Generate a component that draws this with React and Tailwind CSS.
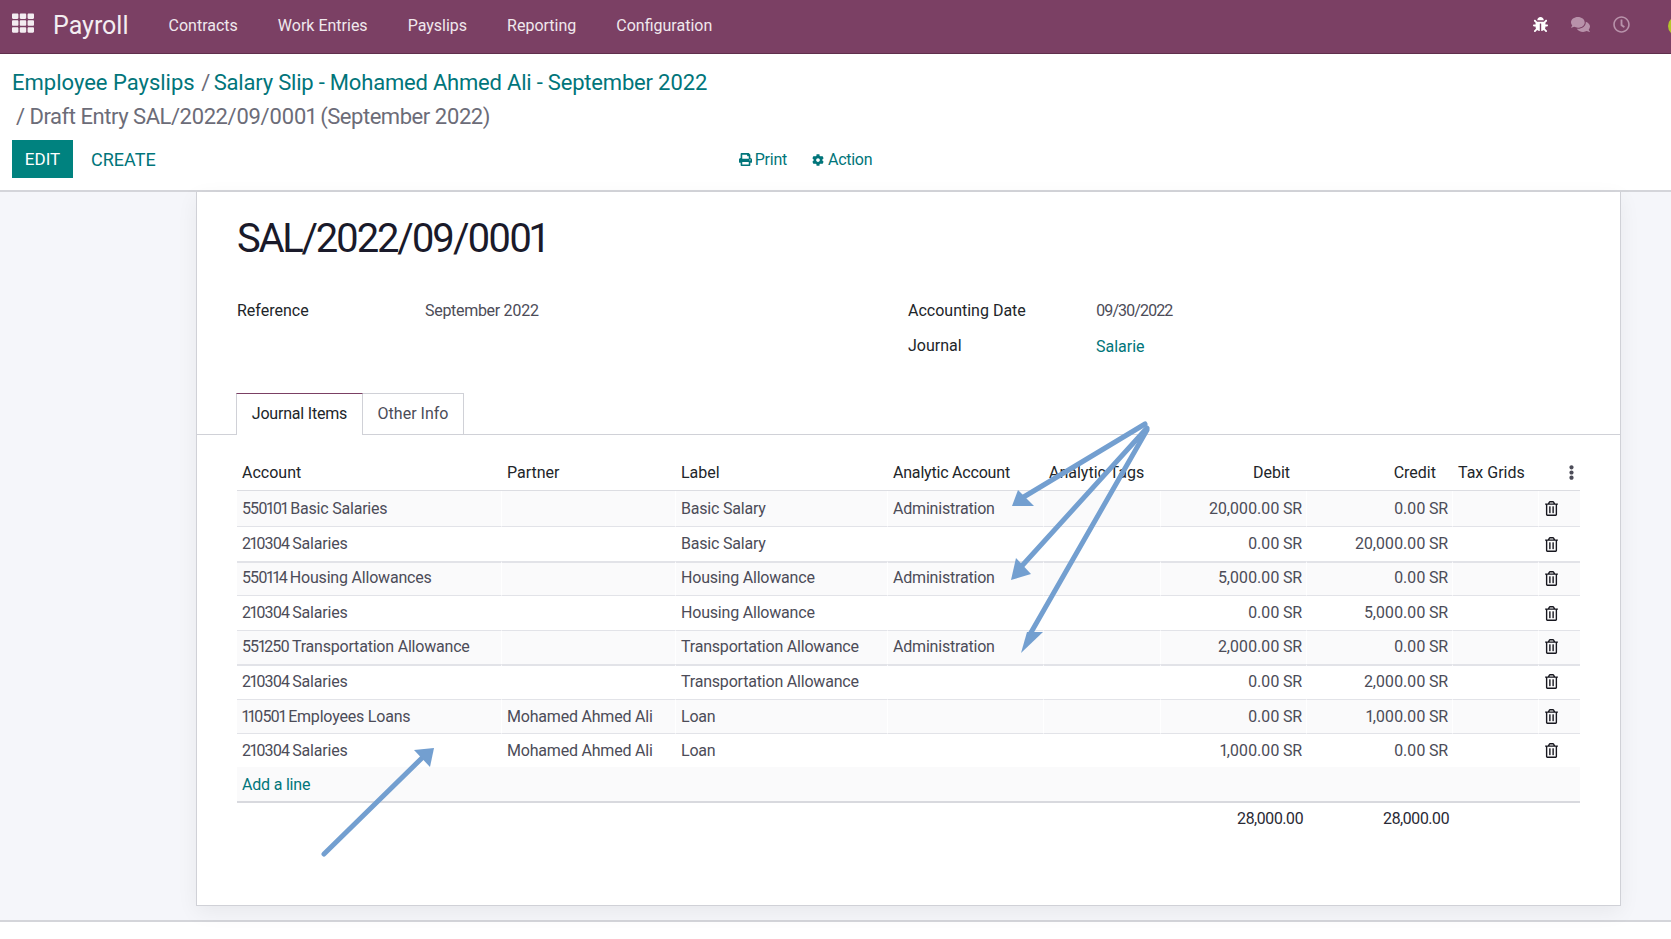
import React from "react";
import { FaTh, FaBug, FaComments, FaRegClock, FaPrint, FaCog, FaEllipsisV, FaRegTrashAlt } from "react-icons/fa";

const rows = [
  { code: "550101", a: "Basic Salaries", p: "", l: "Basic Salary", n: "Administration", d: "20,000.00 SR", c: "0.00 SR", h: "h-[35px]", b: "border-t-0", s: "bg-[#fafafb]", t: "" },
  { code: "210304", a: "Salaries", p: "", l: "Basic Salary", n: "", d: "0.00 SR", c: "20,000.00 SR", h: "h-[35px]", b: "border-t", s: "bg-white", t: "" },
  { code: "550114", a: "Housing Allowances", p: "", l: "Housing Allowance", n: "Administration", d: "5,000.00 SR", c: "0.00 SR", h: "h-[34px]", b: "border-t-2", s: "bg-[#fafafb]", t: "pb-[2px]" },
  { code: "210304", a: "Salaries", p: "", l: "Housing Allowance", n: "", d: "0.00 SR", c: "5,000.00 SR", h: "h-[35px]", b: "border-t", s: "bg-white", t: "" },
  { code: "551250", a: "Transportation Allowance", p: "", l: "Transportation Allowance", n: "Administration", d: "2,000.00 SR", c: "0.00 SR", h: "h-[34px]", b: "border-t", s: "bg-[#fafafb]", t: "pb-[2px]" },
  { code: "210304", a: "Salaries", p: "", l: "Transportation Allowance", n: "", d: "0.00 SR", c: "2,000.00 SR", h: "h-[35px]", b: "border-t-2", s: "bg-white", t: "pb-[2px]" },
  { code: "110501", a: "Employees Loans", p: "Mohamed Ahmed Ali", l: "Loan", n: "", d: "0.00 SR", c: "1,000.00 SR", h: "h-[34px]", b: "border-t", s: "bg-[#fafafb]", t: "" },
  { code: "210304", a: "Salaries", p: "Mohamed Ahmed Ali", l: "Loan", n: "", d: "1,000.00 SR", c: "0.00 SR", h: "h-[34px]", b: "border-t", s: "bg-white", t: "" },
];

const nav = ["Contracts", "Work Entries", "Payslips", "Reporting", "Configuration"];

function Arrows() {
  const color = "#739fd0";
  return (
    <svg className="absolute left-0 top-0 pointer-events-none" width="1671" height="939" viewBox="0 0 1671 939">
      <g stroke={color} strokeWidth="5" strokeLinecap="round" fill="none">
        <line x1="1145" y1="424" x2="1022" y2="498" />
        <line x1="1147" y1="428" x2="1020" y2="568" />
        <line x1="1147" y1="430" x2="1029" y2="636" />
        <line x1="324" y1="854" x2="424" y2="756" />
      </g>
      <g fill={color}>
        <polygon points="1012,506 1034,506 1018,490" />
        <polygon points="1011,580 1031,574 1016,558" />
        <polygon points="1021,653 1043,632 1027,632" />
        <polygon points="434,748 414,750 430,767" />
      </g>
    </svg>
  );
}

export default function App() {
  return (
    <div className="relative w-[1671px] h-[939px] overflow-hidden bg-white font-['Roboto',sans-serif] text-[16px] text-[#4c4c58] proportional-nums">
      <header className="h-[54px] bg-[#7b4064] border-b border-[#5f2f4c] flex items-center text-white">
        <FaTh className="ml-[12px] -mt-[7px] w-[22px] h-[22px] text-[#f3edf1]" />
        <span className="ml-[19px] -mt-[2px] text-[25px] leading-none text-[#f3edf1]">Payroll</span>
        <nav className="ml-[40px] -mt-[2px] flex gap-[40px] text-[16px] text-[#f0e8ed]">
          {nav.map((n) => (
            <span key={n}>{n}</span>
          ))}
        </nav>
        <div className="ml-auto -mt-[4px] flex items-center">
          <FaBug className="w-[15px] h-[15px] text-white" />
          <FaComments className="ml-[23px] w-[19px] h-[19px] text-[#b892aa]" />
          <FaRegClock className="ml-[23px] w-[17px] h-[17px] text-[#b892aa]" />
          <div className="ml-[38px] -mr-[17px] mt-[2px] w-[20px] h-[20px] rounded-full bg-[#b5c42a]" />
        </div>
      </header>

      <section className="h-[138px] border-b-2 border-[#d4d5da] pl-[12px]">
        <div className="pt-[13px] h-[46px] text-[22px] leading-[32px] text-[#01757a] whitespace-nowrap">
          Employee Payslips <span className="ml-[1px] text-[#6c6c78]">/</span>{" "}
          <span className="-ml-[2px] tracking-[-0.2px]">Salary Slip - Mohamed Ahmed Ali - September 2022</span>
        </div>
        <div className="h-[33px] pl-[4px] text-[22px] leading-[33px] text-[#6c6c78] whitespace-nowrap tracking-[-0.47px]">
          / Draft Entry SAL/2022/09/0001 (September 2022)
        </div>
        <div className="mt-[7px] flex items-center h-[38px] text-[16px]">
          <button className="w-[61px] h-[38px] bg-[#00827f] text-white text-[17px] pt-[1px]">EDIT</button>
          <button className="ml-[18px] text-[#01757a] text-[18px] pt-[1px]">CREATE</button>
          <span className="ml-[583px] pt-[1px] flex items-center gap-[3px] text-[#01757a] tracking-[-0.2px]">
            <FaPrint className="w-[13px] h-[13px]" /> Print
          </span>
          <span className="ml-[25px] pt-[1px] flex items-center gap-[4px] text-[#01757a] tracking-[-0.3px]">
            <FaCog className="w-[12px] h-[12px]" /> Action
          </span>
        </div>
      </section>

      <main className="h-[730px] bg-[#f5f6fa] border-b-2 border-[#d4d5da] pl-[196px]">
        <div className="w-[1425px] h-[714px] bg-white border-x border-b border-[#d0d1d7] shadow-[0_6px_20px_rgba(0,0,0,0.06)]">
          <h1 className="pl-[40px] pt-[23px] text-[40px] leading-[48px] text-[#1a1a2a] font-normal tracking-[-2.3px]">SAL/2022/09/0001</h1>
          <div className="mt-[30px] pl-[40px] flex">
            <div className="w-[671px] flex h-[35px] items-center">
              <span className="w-[188px] text-[#212529]">Reference</span>
              <span className="tracking-[-0.3px]">September 2022</span>
            </div>
            <div className="flex flex-col">
              <div className="flex h-[35px] items-center">
                <span className="w-[188px] text-[#212529]">Accounting Date</span>
                <span className="tracking-[-1px]">09/30/2022</span>
              </div>
              <div className="flex h-[35px] items-center">
                <span className="w-[188px] text-[#212529]">Journal</span>
                <span className="pt-[2px] text-[#01757a]">Salarie</span>
              </div>
            </div>
          </div>

          <div className="mt-[30px] h-[42px] pl-[39px] flex border-b border-[#d0d1d7]">
            <div className="w-[127px] h-[42px] bg-white border-x border-[#d0d1d7] border-t border-t-[#7b4064] flex items-center justify-center text-[#212529] pb-[1px] tracking-[-0.2px]">
              Journal Items
            </div>
            <div className="w-[101px] h-[41px] border-t border-r border-[#d0d1d7] flex items-center justify-center">
              Other Info
            </div>
          </div>

          <div className="ml-[40px] w-[1343px] mt-[20px]">
            <table className="w-full table-fixed border-separate border-spacing-0">
              <colgroup>
                <col className="w-[265px]" />
                <col className="w-[174px]" />
                <col className="w-[212px]" />
                <col className="w-[156px]" />
                <col className="w-[117px]" />
                <col className="w-[146px]" />
                <col className="w-[146px]" />
                <col className="w-[86px]" />
                <col className="w-[41px]" />
              </colgroup>
              <thead className="text-[#212529]">
                <tr className="h-[36px]">
                  <th className="font-normal text-left pl-[5px] border-b border-[#dcdde2]">Account</th>
                  <th className="font-normal text-left pl-[5px] border-b border-[#dcdde2]">Partner</th>
                  <th className="font-normal text-left pl-[5px] border-b border-[#dcdde2]">Label</th>
                  <th className="font-normal text-left pl-[5px] border-b border-[#dcdde2] whitespace-nowrap tracking-[-0.2px]">Analytic Account</th>
                  <th className="font-normal text-left pl-[5px] border-b border-[#dcdde2] whitespace-nowrap">Analytic Tags</th>
                  <th className="font-normal text-right pr-[17px] border-b border-[#dcdde2]">Debit</th>
                  <th className="font-normal text-right pr-[17px] border-b border-[#dcdde2]">Credit</th>
                  <th className="font-normal text-left pl-[5px] border-b border-[#dcdde2] whitespace-nowrap">Tax Grids</th>
                  <th className="font-normal border-b border-[#dcdde2]">
                    <FaEllipsisV className="ml-[26px] w-[13px] h-[15px] text-[#4c4c58]" />
                  </th>
                </tr>
              </thead>
              <tbody className="tracking-[-0.2px]">
                {rows.map((r, i) => (
                  <tr key={i} className={`${r.h} ${r.s}`}>
                    <td className={`${r.b} ${r.t} border-[#e2e3e8] border-r border-r-white pl-[5px] whitespace-nowrap`}>
                      <span className="tracking-[-0.9px]">{r.code} </span>
                      {r.a}
                    </td>
                    <td className={`${r.b} ${r.t} border-[#e2e3e8] border-r border-r-white pl-[5px] whitespace-nowrap`}>{r.p}</td>
                    <td className={`${r.b} ${r.t} border-[#e2e3e8] border-r border-r-white pl-[5px] whitespace-nowrap`}>{r.l}</td>
                    <td className={`${r.b} ${r.t} border-[#e2e3e8] border-r border-r-white pl-[5px] whitespace-nowrap`}>{r.n}</td>
                    <td className={`${r.b} border-[#e2e3e8] border-r border-r-white`}></td>
                    <td className={`${r.b} ${r.t} border-[#e2e3e8] border-r border-r-white pr-[4px] text-right whitespace-nowrap`}>{r.d}</td>
                    <td className={`${r.b} ${r.t} border-[#e2e3e8] border-r border-r-white pr-[4px] text-right whitespace-nowrap`}>{r.c}</td>
                    <td className={`${r.b} border-[#e2e3e8] border-r border-r-white`}></td>
                    <td className={`${r.b} ${r.t} border-[#e2e3e8]`}>
                      <FaRegTrashAlt className="block ml-[6px] w-[13px] h-[15px] text-[#17171f]" />
                    </td>
                  </tr>
                ))}
                <tr className="h-[34px] bg-[#fafafb]">
                  <td colSpan={9} className="pl-[5px] pt-[1px] text-[#01757a]">Add a line</td>
                </tr>
              </tbody>
              <tfoot className="text-[#2a2a35]">
                <tr className="h-[33px]">
                  <td colSpan={5} className="border-t-2 border-[#d8d9de]"></td>
                  <td className="border-t-2 border-[#d8d9de] pr-[4px] text-right tracking-[-0.7px]">28,000.00</td>
                  <td className="border-t-2 border-[#d8d9de] pr-[4px] text-right tracking-[-0.7px]">28,000.00</td>
                  <td colSpan={2} className="border-t-2 border-[#d8d9de]"></td>
                </tr>
              </tfoot>
            </table>
          </div>
        </div>
      </main>

      <Arrows />
    </div>
  );
}
